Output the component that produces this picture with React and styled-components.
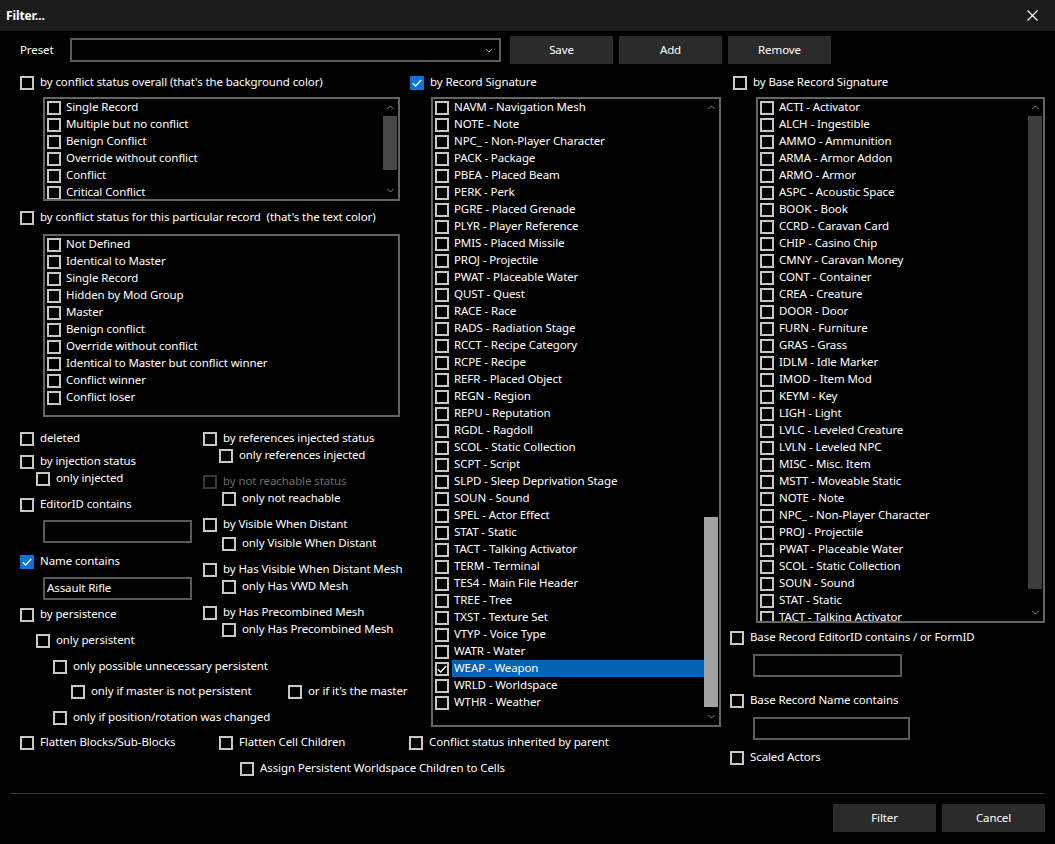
import styled, { createGlobalStyle } from "styled-components";

const GlobalStyle = createGlobalStyle`
  html, body { margin: 0; padding: 0; background: #000; }
  body {
    font-family: "Noto Sans", "Open Sans", sans-serif;
    font-size: 11.5px;
    letter-spacing: -0.1px;
    color: #fff;
  }
`;

const conflictOverall = [
  "Single Record",
  "Multiple but no conflict",
  "Benign Conflict",
  "Override without conflict",
  "Conflict",
  "Critical Conflict",
];

const conflictRecord = [
  "Not Defined",
  "Identical to Master",
  "Single Record",
  "Hidden by Mod Group",
  "Master",
  "Benign conflict",
  "Override without conflict",
  "Identical to Master but conflict winner",
  "Conflict winner",
  "Conflict loser",
];

const signatures = [
  "NAVM - Navigation Mesh", "NOTE - Note", "NPC_ - Non-Player Character", "PACK - Package",
  "PBEA - Placed Beam", "PERK - Perk", "PGRE - Placed Grenade", "PLYR - Player Reference",
  "PMIS - Placed Missile", "PROJ - Projectile", "PWAT - Placeable Water", "QUST - Quest",
  "RACE - Race", "RADS - Radiation Stage", "RCCT - Recipe Category", "RCPE - Recipe",
  "REFR - Placed Object", "REGN - Region", "REPU - Reputation", "RGDL - Ragdoll",
  "SCOL - Static Collection", "SCPT - Script", "SLPD - Sleep Deprivation Stage", "SOUN - Sound",
  "SPEL - Actor Effect", "STAT - Static", "TACT - Talking Activator", "TERM - Terminal",
  "TES4 - Main File Header", "TREE - Tree", "TXST - Texture Set", "VTYP - Voice Type",
  "WATR - Water", "WEAP - Weapon", "WRLD - Worldspace", "WTHR - Weather",
];

const baseSignatures = [
  "ACTI - Activator", "ALCH - Ingestible", "AMMO - Ammunition", "ARMA - Armor Addon",
  "ARMO - Armor", "ASPC - Acoustic Space", "BOOK - Book", "CCRD - Caravan Card",
  "CHIP - Casino Chip", "CMNY - Caravan Money", "CONT - Container", "CREA - Creature",
  "DOOR - Door", "FURN - Furniture", "GRAS - Grass", "IDLM - Idle Marker",
  "IMOD - Item Mod", "KEYM - Key", "LIGH - Light", "LVLC - Leveled Creature",
  "LVLN - Leveled NPC", "MISC - Misc. Item", "MSTT - Moveable Static", "NOTE - Note",
  "NPC_ - Non-Player Character", "PROJ - Projectile", "PWAT - Placeable Water",
  "SCOL - Static Collection", "SOUN - Sound", "STAT - Static", "TACT - Talking Activator",
];

const Tick = () => (
  <svg width="10" height="8" viewBox="0 0 10 8">
    <path d="M0.8 4.2 L3.6 7 L9.2 1" fill="none" stroke="#fff" strokeWidth="1.3" />
  </svg>
);

const Chevron = ({ up, w = 7, color = "#8a8a8a" }) => (
  <svg width={w} height="5" viewBox="0 0 7 5">
    <path
      d={up ? "M0.5 4 L3.5 1 L6.5 4" : "M0.5 1 L3.5 4 L6.5 1"}
      fill="none"
      stroke={color}
      strokeWidth="1"
    />
  </svg>
);

const Check = ({ label, checked, disabled, mt, indent, width }) => (
  <CheckRow $mt={mt} $indent={indent} $disabled={disabled} style={width ? { width } : undefined}>
    <Box $checked={checked} $disabled={disabled}>{checked && <Tick />}</Box>
    <Label>{label}</Label>
  </CheckRow>
);

const CheckList = ({ items, height, selected, thumb, thumbColor, noScroll }) => (
  <ListBox $h={height}>
    <Items>
      {items.map((it) => (
        <Item key={it}>
          <ItemBox>{it === selected && <Tick />}</ItemBox>
          <ItemText $selected={it === selected}>
            <Label>{it}</Label>
          </ItemText>
        </Item>
      ))}
    </Items>
    {!noScroll && (
      <ScrollBar>
        <Arrow><Chevron up /></Arrow>
        <Track>
          <Thumb $top={thumb[0]} $len={thumb[1]} $color={thumbColor} />
        </Track>
        <Arrow><Chevron /></Arrow>
      </ScrollBar>
    )}
  </ListBox>
);

export default function App() {
  return (
    <Window>
      <GlobalStyle />
      <TitleBar>
        <Title>Filter...</Title>
        <svg width="11" height="11" viewBox="0 0 11 11">
          <path d="M0.5 0.5 L10.5 10.5 M10.5 0.5 L0.5 10.5" stroke="#fff" strokeWidth="1.2" />
        </svg>
      </TitleBar>

      <Body>
        <PresetRow>
          <PresetLabel>Preset</PresetLabel>
          <Combo>
            <Chevron w={12} color="#9a9a9a" />
          </Combo>
          <Button>Save</Button>
          <Button>Add</Button>
          <Button>Remove</Button>
        </PresetRow>

        <MainGrid>
          <LeftCol>
            <Check label="by conflict status overall (that's the background color)" />
            <ListWrap $mt={6} $ml={23} $w={357}>
              <CheckList items={conflictOverall} height={104} thumb={[0, 54]} thumbColor="#474747" />
            </ListWrap>
            <Check mt={8} label="by conflict status for this particular record  (that's the text color)" />
            <ListWrap $mt={8} $ml={23} $w={357}>
              <CheckList items={conflictRecord} height={183} noScroll />
            </ListWrap>

            <LowerGrid>
              <SubCol>
                <Check label="deleted" />
                <Check mt={6} label="by injection status" />
                <Check indent={16} label="only injected" />
                <Check mt={9} label="EditorID contains" />
                <TextBox $mt={7} $w={149} />
                <Check mt={10} checked label="Name contains" />
                <TextBox $mt={7} $w={149}><Label>Assault Rifle</Label></TextBox>
                <Check mt={6} label="by persistence" />
                <Check mt={9} indent={16} label="only persistent" />
                <Check mt={9} indent={33} label="only possible unnecessary persistent" />
                <PairRow $mt={8} $indent={51}>
                  <Check width="217px" label="only if master is not persistent" />
                  <Check label="or if it's the master" />
                </PairRow>
                <Check mt={9} indent={33} label="only if position/rotation was changed" />
              </SubCol>
              <SubCol>
                <Check label="by references injected status" />
                <Check indent={16} label="only references injected" />
                <Check mt={9} disabled label="by not reachable status" />
                <Check indent={19} label="only not reachable" />
                <Check mt={9} label="by Visible When Distant" />
                <Check mt={2} indent={19} label="only Visible When Distant" />
                <Check mt={9} label="by Has Visible When Distant Mesh" />
                <Check indent={19} label="only Has VWD Mesh" />
                <Check mt={9} label="by Has Precombined Mesh" />
                <Check indent={19} label="only Has Precombined Mesh" />
              </SubCol>
            </LowerGrid>
          </LeftCol>

          <MidCol>
            <Check indent={1} checked label="by Record Signature" />
            <ListWrap $mt={6} $ml={22} $w={290}>
              <CheckList
                items={signatures}
                height={630}
                selected="WEAP - Weapon"
                thumb={[401, 190]}
                thumbColor="#a3a3a3"
              />
            </ListWrap>
          </MidCol>

          <RightCol>
            <Check indent={3} label="by Base Record Signature" />
            <ListWrap $mt={6} $ml={26} $w={289}>
              <CheckList items={baseSignatures} height={526} thumb={[0, 473]} thumbColor="#3d3d3d" />
            </ListWrap>
            <Check mt={6} label="Base Record EditorID contains / or FormID" />
            <TextBox $mt={8} $w={149} />
            <Check mt={15} label="Base Record Name contains" />
            <TextBox $mt={8} $w={157} />
            <Check mt={9} label="Scaled Actors" />
          </RightCol>

          <BottomRows>
            <FlagRow>
              <Check label="Flatten Blocks/Sub-Blocks" />
              <Check label="Flatten Cell Children" />
              <Check label="Conflict status inherited by parent" />
            </FlagRow>
            <Check mt={9} indent={220} label="Assign Persistent Worldspace Children to Cells" />
          </BottomRows>
        </MainGrid>

        <Separator />
        <Footer>
          <Button>Filter</Button>
          <Button>Cancel</Button>
        </Footer>
      </Body>
    </Window>
  );
}

const Window = styled.div`
  width: 1055px;
  height: 844px;
  background: #000;
  overflow: hidden;
`;

const TitleBar = styled.div`
  height: 31px;
  background: #1b1b1b;
  display: flex;
  align-items: center;
  justify-content: space-between;
  padding: 0 17px 0 6px;
`;

const Title = styled.div`
  font-weight: bold;
  font-size: 12px;
`;

const Body = styled.div`
  padding: 0 10px;
`;

const PresetRow = styled.div`
  margin-top: 5px;
  height: 28px;
  padding-left: 10px;
  display: flex;
  align-items: center;
`;

const PresetLabel = styled.div`
  width: 50px;
  padding-bottom: 1px;
`;

const Combo = styled.div`
  width: 431px;
  height: 24px;
  box-sizing: border-box;
  border: 2px solid #5c5c5c;
  margin-right: 9px;
  display: flex;
  align-items: center;
  justify-content: flex-end;
  padding-right: 4px;
`;

const Button = styled.div`
  width: 103px;
  height: 28px;
  padding-bottom: 1px;
  box-sizing: border-box;
  background: #2b2b2b;
  display: flex;
  align-items: center;
  justify-content: center;
  & + & {
    margin-left: 6px;
  }
`;

const MainGrid = styled.div`
  margin-top: 10px;
  padding-left: 10px;
  display: grid;
  grid-template-columns: 389px 321px 315px;
  grid-template-rows: auto auto;
  align-items: start;
`;

const LeftCol = styled.div`
  grid-column: 1;
  grid-row: 1;
  display: flex;
  flex-direction: column;
`;

const MidCol = styled.div`
  grid-column: 2;
  grid-row: 1;
  display: flex;
  flex-direction: column;
`;

const RightCol = styled.div`
  grid-column: 3;
  grid-row: 1 / span 2;
  display: flex;
  flex-direction: column;
`;

const BottomRows = styled.div`
  grid-column: 1 / span 2;
  grid-row: 2;
  margin-top: 7px;
  display: flex;
  flex-direction: column;
`;

const FlagRow = styled.div`
  display: grid;
  grid-template-columns: 199px 190px auto;
`;

const LowerGrid = styled.div`
  margin-top: 13px;
  display: grid;
  grid-template-columns: 183px 1fr;
  align-items: start;
`;

const SubCol = styled.div`
  display: flex;
  flex-direction: column;
`;

const PairRow = styled.div`
  display: flex;
  margin-top: ${(p) => p.$mt || 0}px;
  margin-left: ${(p) => p.$indent || 0}px;
`;

const CheckRow = styled.div`
  display: flex;
  align-items: center;
  gap: 6px;
  height: 17px;
  flex: none;
  white-space: pre;
  margin-top: ${(p) => p.$mt || 0}px;
  margin-left: ${(p) => p.$indent || 0}px;
  color: ${(p) => (p.$disabled ? "#6b6b6b" : "#fff")};
`;

const Label = styled.span`
  white-space: pre;
  position: relative;
  top: -1px;
`;

const Box = styled.span`
  width: 14px;
  height: 14px;
  box-sizing: border-box;
  flex: none;
  display: flex;
  align-items: center;
  justify-content: center;
  background: ${(p) => (p.$checked ? "#0a73d6" : "transparent")};
  border: 2px solid ${(p) => (p.$checked ? "#0a73d6" : p.$disabled ? "#383838" : "#c8c8c8")};
`;

const TextBox = styled.div`
  margin-top: ${(p) => p.$mt || 0}px;
  margin-left: 23px;
  width: ${(p) => p.$w}px;
  height: 23px;
  box-sizing: border-box;
  border: 2px solid #5a5a5a;
  padding-left: 2px;
  display: flex;
  align-items: center;
`;

const ListWrap = styled.div`
  margin-top: ${(p) => p.$mt}px;
  margin-left: ${(p) => p.$ml}px;
  width: ${(p) => p.$w}px;
`;

const ListBox = styled.div`
  height: ${(p) => p.$h}px;
  box-sizing: border-box;
  border: 2px solid #646464;
  display: flex;
  overflow: hidden;
`;

const Items = styled.div`
  flex: 1;
  display: flex;
  flex-direction: column;
  overflow: hidden;
`;

const Item = styled.div`
  display: flex;
  align-items: center;
  height: 17px;
  flex: none;
  padding-left: 2px;
  white-space: nowrap;
`;

const ItemBox = styled(Box)`
  border-color: #c8c8c8;
  background: transparent;
`;

const ItemText = styled.span`
  flex: 1;
  height: 17px;
  margin-left: 3px;
  padding-left: 2px;
  display: flex;
  align-items: center;
  background: ${(p) => (p.$selected ? "#0663b1" : "transparent")};
`;

const ScrollBar = styled.div`
  width: 15px;
  flex: none;
  display: flex;
  flex-direction: column;
`;

const Arrow = styled.div`
  height: 17px;
  flex: none;
  display: flex;
  align-items: center;
  justify-content: center;
`;

const Track = styled.div`
  flex: 1;
  display: flex;
  flex-direction: column;
`;

const Thumb = styled.div`
  margin-top: ${(p) => p.$top}px;
  height: ${(p) => p.$len}px;
  width: 14px;
  background: ${(p) => p.$color};
`;

const Separator = styled.div`
  margin-top: 16px;
  height: 1px;
  background: #3a3a3a;
`;

const Footer = styled.div`
  margin-top: 10px;
  display: flex;
  justify-content: flex-end;
  & > div + div {
    margin-left: 7px;
  }
`;
